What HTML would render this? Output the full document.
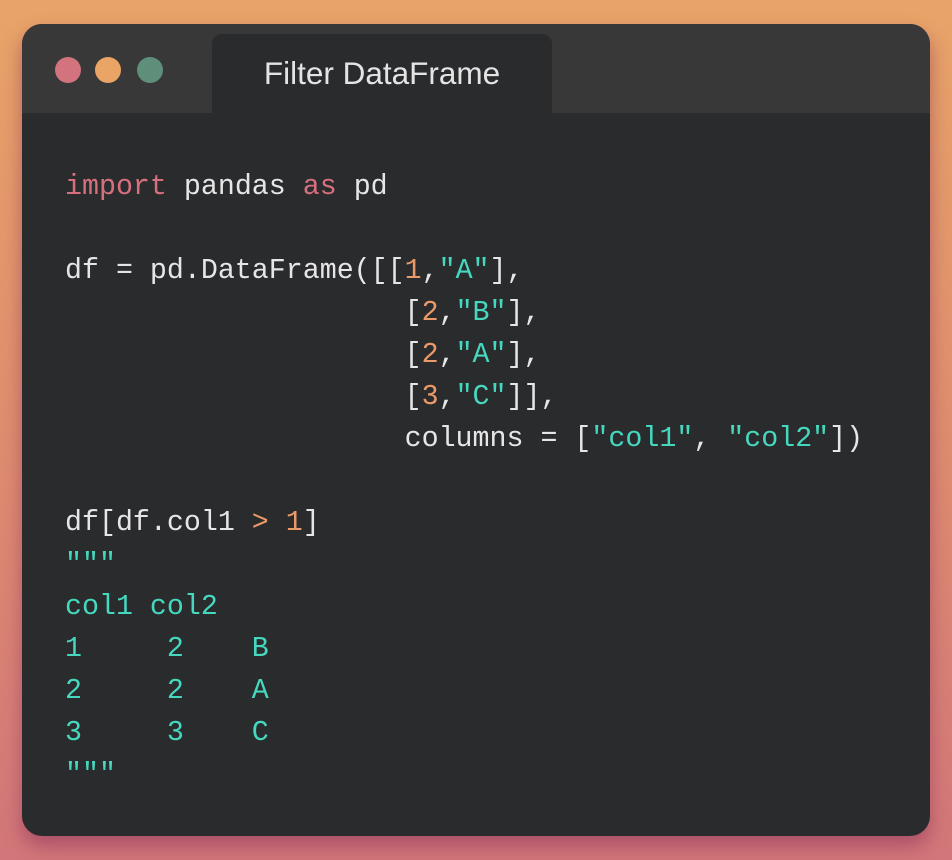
<!DOCTYPE html>
<html><head><style>
html,body{margin:0;padding:0;}
body{width:952px;height:860px;position:relative;overflow:hidden;background:linear-gradient(180deg,#e8a468 0%,#e0906e 45%,#d2767a 100%);}
.win{position:absolute;left:22px;top:24px;width:908px;height:812px;border-radius:20px;background:#2a2b2d;overflow:hidden;box-shadow:0 10px 18px rgba(140,50,90,0.55);}
.hdr{position:absolute;left:0;top:0;width:100%;height:89px;background:#383838;}
.tab{position:absolute;left:190px;top:10px;width:340px;height:79px;background:#2a2b2d;border-radius:10px 10px 0 0;color:#e4e4e4;font:31.5px "Liberation Sans",sans-serif;text-align:center;line-height:78px;}
.dot{position:absolute;top:33px;width:26px;height:26px;border-radius:50%;}
pre{position:absolute;left:43px;top:142px;margin:0;font:28.3px/42px "Liberation Mono",monospace;color:#e6e6e6;}
.k{color:#d6707f}.n{color:#ea9a68}.s{color:#45d8bf}
</style></head><body>
<div class="win">
<div class="hdr"></div>
<div class="tab">Filter DataFrame</div>
<div class="dot" style="left:33px;background:#d2737d"></div>
<div class="dot" style="left:73px;background:#e9a466"></div>
<div class="dot" style="left:115px;background:#5e8f7b"></div>
<pre><span class="k">import</span> pandas <span class="k">as</span> pd

df = pd.DataFrame([[<span class="n">1</span>,<span class="s">"A"</span>],
                    [<span class="n">2</span>,<span class="s">"B"</span>],
                    [<span class="n">2</span>,<span class="s">"A"</span>],
                    [<span class="n">3</span>,<span class="s">"C"</span>]],
                    columns = [<span class="s">"col1"</span>, <span class="s">"col2"</span>])

df[df.col1 <span class="n">&gt;</span> <span class="n">1</span>]
<span class="s">"""
col1 col2
1     2    B
2     2    A
3     3    C
"""</span></pre>
</div>
</body></html>
